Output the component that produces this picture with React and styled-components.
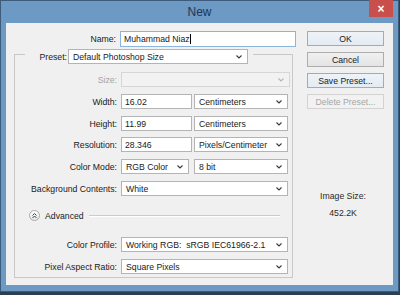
import React from 'react';
import styled, { createGlobalStyle } from 'styled-components';

const Global = createGlobalStyle`
  html, body { margin: 0; padding: 0; background: #2c3e52; }
  body { font-family: "Liberation Sans", Arial, sans-serif; font-size: 8.7px; color: #1a1a1a; }
  #root { width: 400px; height: 295px; overflow: hidden; }
  * { box-sizing: border-box; }
`;

const Window = styled.div`
  width: 399px;
  height: 292px;
  border: 1px solid #3d5b7a;
  background: #6d99c5;
  padding: 0 5px 6px 5px;
  display: flex;
  flex-direction: column;
`;

const TitleBar = styled.div`
  height: 22px;
  display: grid;
  grid-template-columns: 1fr auto 1fr;
  align-items: start;
`;

const Title = styled.div`
  grid-column: 2;
  font-size: 12px;
  line-height: 23px;
  color: #1d3552;
`;

const CloseBtn = styled.div`
  grid-column: 3;
  justify-self: end;
  width: 24px;
  height: 17px;
  margin-top: -1px;
  background: #c94f4c;
  color: #fff;
  font-size: 12px;
  font-weight: bold;
  display: flex;
  align-items: center;
  justify-content: center;
  line-height: 1;
`;

const Content = styled.div`
  flex: 1;
  background: #f0f0f0;
  display: flex;
  padding-top: 8px;
`;

const Left = styled.div`
  width: 295px;
  display: flex;
  flex-direction: column;
`;

const NameRow = styled.div`
  display: grid;
  grid-template-columns: 110px 176px;
  column-gap: 4px;
  align-items: center;
  height: 16px;
`;

const Label = styled.div`
  text-align: right;
  white-space: nowrap;
  color: ${p => (p.disabled ? '#a3a3a3' : '#1a1a1a')};
`;

const TextBox = styled.div`
  height: ${p => p.h || 15}px;
  width: ${p => (p.w ? p.w + 'px' : 'auto')};
  border: 1px solid ${p => (p.focus ? '#8db4da' : '#b4b4b4')};
  background: #fff;
  display: flex;
  align-items: center;
  padding-left: 3px;
  white-space: nowrap;
`;

const Caret = styled.span`
  display: inline-block;
  width: 1px;
  height: 10px;
  background: #000;
`;

const SelectBox = styled.div`
  height: 15px;
  width: ${p => p.w}px;
  flex: none;
  border: 1px solid ${p => (p.disabled ? '#d6d6d6' : '#b4b4b4')};
  background: ${p => (p.disabled ? '#f2f2f2' : '#fff')};
  display: flex;
  align-items: center;
  padding: 0 5px 0 4px;
  white-space: nowrap;
  span { flex: 1; }
  svg { flex: none; }
`;

const Group = styled.div`
  margin: 1px 0 0 8px;
  width: 279px;
`;

const GroupHeader = styled.div`
  display: flex;
  align-items: center;
  height: 17px;
`;

const Corner = styled.div`
  align-self: flex-start;
  margin-top: 6px;
  height: 11px;
  border-top: 1px solid #c8c8c8;
  ${p => (p.side === 'left' ? 'border-left: 1px solid #c8c8c8; width: 11px;' : 'border-right: 1px solid #c8c8c8; flex: 1; margin-left: 5px;')}
`;

const PresetLabel = styled(Label)`
  width: 42px;
  margin-right: 1px;
`;

const GroupBody = styled.div`
  border: 1px solid #c8c8c8;
  border-top: none;
  padding: 7px 0 3px 0;
  display: flex;
  flex-direction: column;
`;

const Row = styled.div`
  display: grid;
  grid-template-columns: 102px auto;
  column-gap: 4px;
  align-items: center;
  height: 15px;
  margin-top: ${p => p.mt || 0}px;
`;

const Controls = styled.div`
  display: flex;
  gap: ${p => p.gap || 0}px;
`;

const AdvancedRow = styled.div`
  display: flex;
  align-items: center;
  height: 13px;
  margin-top: 13px;
  padding: 0 12px 0 14px;
`;

const RoundBtn = styled.div`
  width: 11px;
  height: 11px;
  border-radius: 50%;
  border: 1px solid #a9a9a9;
  background: linear-gradient(#ffffff, #e6e6e6);
  display: flex;
  align-items: center;
  justify-content: center;
  flex: none;
`;

const AdvText = styled.div`
  margin-left: 5px;
`;

const Separator = styled.div`
  flex: 1;
  margin-left: 5px;
  height: 1px;
  background: #cbcbcb;
  box-shadow: 0 1px 0 #fff;
`;

const Right = styled.div`
  margin-left: 6px;
  width: 77px;
  display: flex;
  flex-direction: column;
  gap: 6px;
`;

const Button = styled.div`
  height: 15px;
  border: 1px solid ${p => (p.disabled ? '#d3d3d3' : p.accent ? '#88b2dc' : '#adadad')};
  background: ${p => (p.disabled ? '#f2f2f2' : p.accent ? 'linear-gradient(#eef3f8, #e3ebf3)' : 'linear-gradient(#f0f0f0, #e4e4e4)')};
  color: ${p => (p.disabled ? '#a6a6a6' : '#1a1a1a')};
  display: flex;
  align-items: center;
  justify-content: center;
  white-space: nowrap;
`;

const Info = styled.div`
  margin-top: 73px;
  width: 72px;
  text-align: center;
  line-height: 17px;
  color: #2a2a2a;
`;

const Chevron = ({ disabled }) => (
  <svg width="6" height="4" viewBox="0 0 6 4">
    <polyline points="0.5,0.5 3,3 5.5,0.5" fill="none" stroke={disabled ? '#b5b5b5' : '#3a3a3a'} strokeWidth="1.1" />
  </svg>
);

const Select = ({ w, children, disabled }) => (
  <SelectBox w={w} disabled={disabled}>
    <span>{children}</span>
    <Chevron disabled={disabled} />
  </SelectBox>
);

const DoubleUp = () => (
  <svg width="7" height="7" viewBox="0 0 7 7">
    <polyline points="1.5,3.5 3.5,1.5 5.5,3.5" fill="none" stroke="#444" strokeWidth="1" />
    <polyline points="1.5,6 3.5,4 5.5,6" fill="none" stroke="#444" strokeWidth="1" />
  </svg>
);

export default function App() {
  return (
    <>
      <Global />
      <Window>
        <TitleBar>
          <Title>New</Title>
          <CloseBtn>×</CloseBtn>
        </TitleBar>
        <Content>
          <Left>
            <NameRow>
              <Label>Name:</Label>
              <TextBox h={16} focus>Muhammad Niaz<Caret /></TextBox>
            </NameRow>
            <Group>
              <GroupHeader>
                <Corner side="left" />
                <PresetLabel>Preset:</PresetLabel>
                <Select w={180}>Default Photoshop Size</Select>
                <Corner side="right" />
              </GroupHeader>
              <GroupBody>
                <Row>
                  <Label disabled>Size:</Label>
                  <Select w={169} disabled></Select>
                </Row>
                <Row mt={7}>
                  <Label>Width:</Label>
                  <Controls gap={2}>
                    <TextBox w={71}>16.02</TextBox>
                    <Select w={94}>Centimeters</Select>
                  </Controls>
                </Row>
                <Row mt={7}>
                  <Label>Height:</Label>
                  <Controls gap={2}>
                    <TextBox w={71}>11.99</TextBox>
                    <Select w={94}>Centimeters</Select>
                  </Controls>
                </Row>
                <Row mt={6}>
                  <Label>Resolution:</Label>
                  <Controls gap={2}>
                    <TextBox w={71}>28.346</TextBox>
                    <Select w={94}>Pixels/Centimeter</Select>
                  </Controls>
                </Row>
                <Row mt={7}>
                  <Label>Color Mode:</Label>
                  <Controls gap={5}>
                    <Select w={68}>RGB Color</Select>
                    <Select w={94}>8 bit</Select>
                  </Controls>
                </Row>
                <Row mt={7}>
                  <Label>Background Contents:</Label>
                  <Select w={167}>White</Select>
                </Row>
                <AdvancedRow>
                  <RoundBtn><DoubleUp /></RoundBtn>
                  <AdvText>Advanced</AdvText>
                  <Separator />
                </AdvancedRow>
                <Row mt={15}>
                  <Label>Color Profile:</Label>
                  <Select w={167}>Working RGB:&nbsp; sRGB IEC61966-2.1</Select>
                </Row>
                <Row mt={7}>
                  <Label>Pixel Aspect Ratio:</Label>
                  <Select w={167}>Square Pixels</Select>
                </Row>
              </GroupBody>
            </Group>
          </Left>
          <Right>
            <Button accent>OK</Button>
            <Button>Cancel</Button>
            <Button accent>Save Preset...</Button>
            <Button disabled>Delete Preset...</Button>
            <Info>
              <div>Image Size:</div>
              <div>452.2K</div>
            </Info>
          </Right>
        </Content>
      </Window>
    </>
  );
}
